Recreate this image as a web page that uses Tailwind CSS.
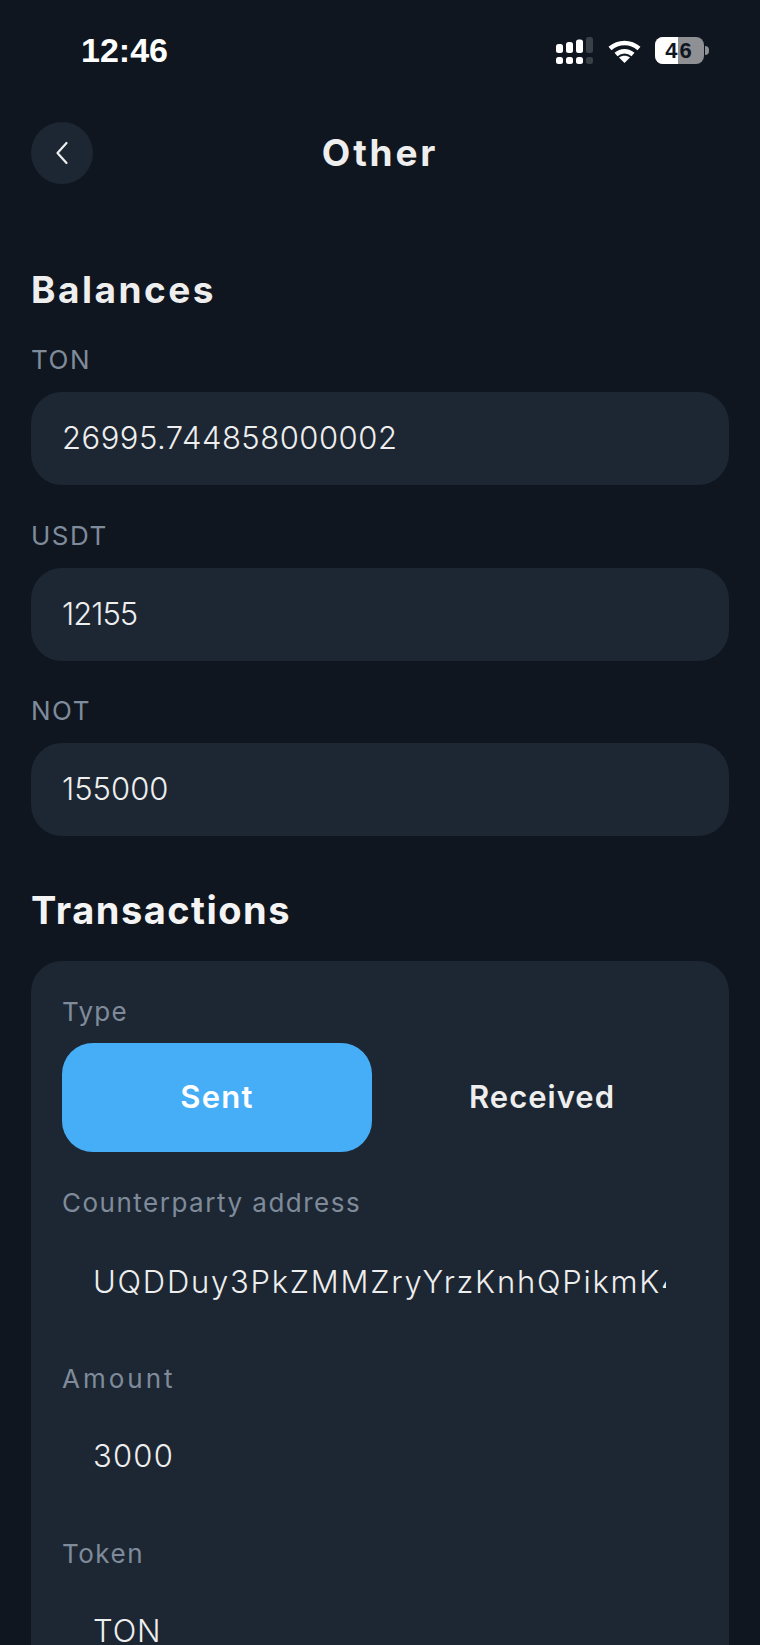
<!doctype html>
<html><head><meta charset="utf-8"><script src="https://cdn.jsdelivr.net/npm/@tailwindcss/browser@4"></script></head>
<body class="bg-[#0f161f]">
<div class="w-[760px] h-[1645px] overflow-hidden bg-[#0f161f] font-['Inter',sans-serif] text-[#eeeeee]">
  <div class="h-[96px] pl-[81px] pr-[51px] flex items-start justify-between">
    <div class="mt-[30px] text-[34px] leading-[40px] font-semibold font-['Liberation_Sans',sans-serif] text-white">12:46</div>
    <div class="mt-[37px] flex items-start">
      <svg width="37" height="27" viewBox="0 0 37 27" fill="#fff"><rect x="0" y="7" width="7" height="9" rx="2.5"/><rect x="10" y="5" width="7" height="11" rx="2.5"/><rect x="20" y="2.500" width="7" height="13.500" rx="2.5"/><rect x="30" y="0" width="7" height="16" rx="2.5" fill="#3a4048"/><rect x="0" y="20" width="7" height="7" rx="2.5"/><rect x="10" y="20" width="7" height="7" rx="2.5"/><rect x="20" y="20" width="7" height="7" rx="2.5"/><rect x="30" y="20" width="7" height="7" rx="2.5" fill="#3a4048"/></svg>
      <svg class="ml-[15px] mt-[3px]" width="33" height="23" viewBox="0 0 33 23" fill="none" stroke="#fff" stroke-width="4.500"><path d="M2 8.500C10.500 1 22.500 1 31 8.500"/><path d="M8 14.500C13 10 20 10 25 14.500"/><path d="M16.500 23 11 17.500C14 15 19 15 22 17.500Z" fill="#fff" stroke="none"/></svg>
      <div class="ml-[14px] flex items-center gap-[1px]">
        <div class="relative w-[49px] h-[27px] rounded-[8px] overflow-hidden bg-[#8e9093] flex">
          <div class="w-[23px] h-full bg-white"></div>
          <div class="absolute inset-0 flex items-center justify-center text-[#0f161f] text-[22px] font-semibold font-['Liberation_Sans',sans-serif] tracking-[2px]">46</div>
        </div>
        <div class="w-[4px] h-[9px] rounded-r-full bg-[#8e9093]"></div>
      </div>
    </div>
  </div>
  <div class="relative h-[62px] mt-[26px] mx-[31px] flex items-center justify-center">
    <div class="absolute left-0 top-0 w-[62px] h-[62px] rounded-full bg-[#1d2733] flex items-center justify-center">
      <svg width="14" height="24" viewBox="0 0 14 24" fill="none" stroke="#eeeeee" stroke-width="2.200" stroke-linecap="round" stroke-linejoin="round"><path d="M11.500 2 2.500 12l9 10"/></svg>
    </div>
    <div class="text-[37px] leading-[48px] font-bold tracking-[2.800px]">Other</div>
  </div>
  <div class="px-[31px]">
    <h2 class="mt-[84px] text-[37px] leading-[44px] font-bold tracking-[2.500px]">Balances</h2>
    <div class="mt-[32px] flex flex-col gap-[34.500px]">
      <div><div class="text-[26px] leading-[32px] text-[#7f8b9a] mb-[16px] tracking-[1.500px]">TON</div><div class="h-[93px] rounded-[31px] bg-[#1d2733] pl-[31px] flex items-center text-[31px] font-light tracking-[0.500px]">26995.744858000002</div></div>
      <div><div class="text-[26px] leading-[32px] text-[#7f8b9a] mb-[16px] tracking-[1.500px]">USDT</div><div class="h-[93px] rounded-[31px] bg-[#1d2733] pl-[31px] flex items-center text-[31px] font-light tracking-[-1px]">12155</div></div>
      <div><div class="text-[26px] leading-[32px] text-[#7f8b9a] mb-[16px] tracking-[1.500px]">NOT</div><div class="h-[93px] rounded-[31px] bg-[#1d2733] pl-[31px] flex items-center text-[31px] font-light">155000</div></div>
    </div>
    <h2 class="mt-[51px] text-[38px] leading-[46px] font-bold text-[#f4f4f4] tracking-[1.500px]">Transactions</h2>
    <div class="mt-[28px] h-[800px] rounded-t-[31px] bg-[#1d2733] px-[31px] pt-[35px]">
      <div class="text-[26px] leading-[32px] text-[#7f8b9a] tracking-[1.300px]">Type</div>
      <div class="mt-[15px] flex">
        <div class="w-[310px] shrink-0 h-[109px] rounded-[31px] bg-[#46aef7] flex items-center justify-center text-[31px] font-semibold text-white tracking-[1.300px]">Sent</div>
        <div class="w-[326px] shrink-0 pl-[14px] h-[109px] flex items-center justify-center text-[31px] font-semibold tracking-[1px]">Received</div>
      </div>
      <div class="mt-[35px] text-[26px] leading-[32px] text-[#7f8b9a] tracking-[1.500px]">Counterparty address</div>
      <div class="mt-[43px] ml-[31px] w-[573px] overflow-hidden whitespace-nowrap text-[31px] leading-[40px] font-light tracking-[1.750px]">UQDDuy3PkZMMZryYrzKnhQPikmK4xT9wL2</div>
      <div class="mt-[61px] text-[26px] leading-[32px] text-[#7f8b9a] tracking-[3px]">Amount</div>
      <div class="mt-[41px] ml-[31px] text-[31px] leading-[40px] font-light tracking-[1.200px]">3000</div>
      <div class="mt-[62px] text-[26px] leading-[32px] text-[#7f8b9a] tracking-[1.500px]">Token</div>
      <div class="mt-[41px] ml-[31px] text-[31px] leading-[40px] font-light tracking-[0.900px]">TON</div>
    </div>
  </div>
</div>
</body></html>
